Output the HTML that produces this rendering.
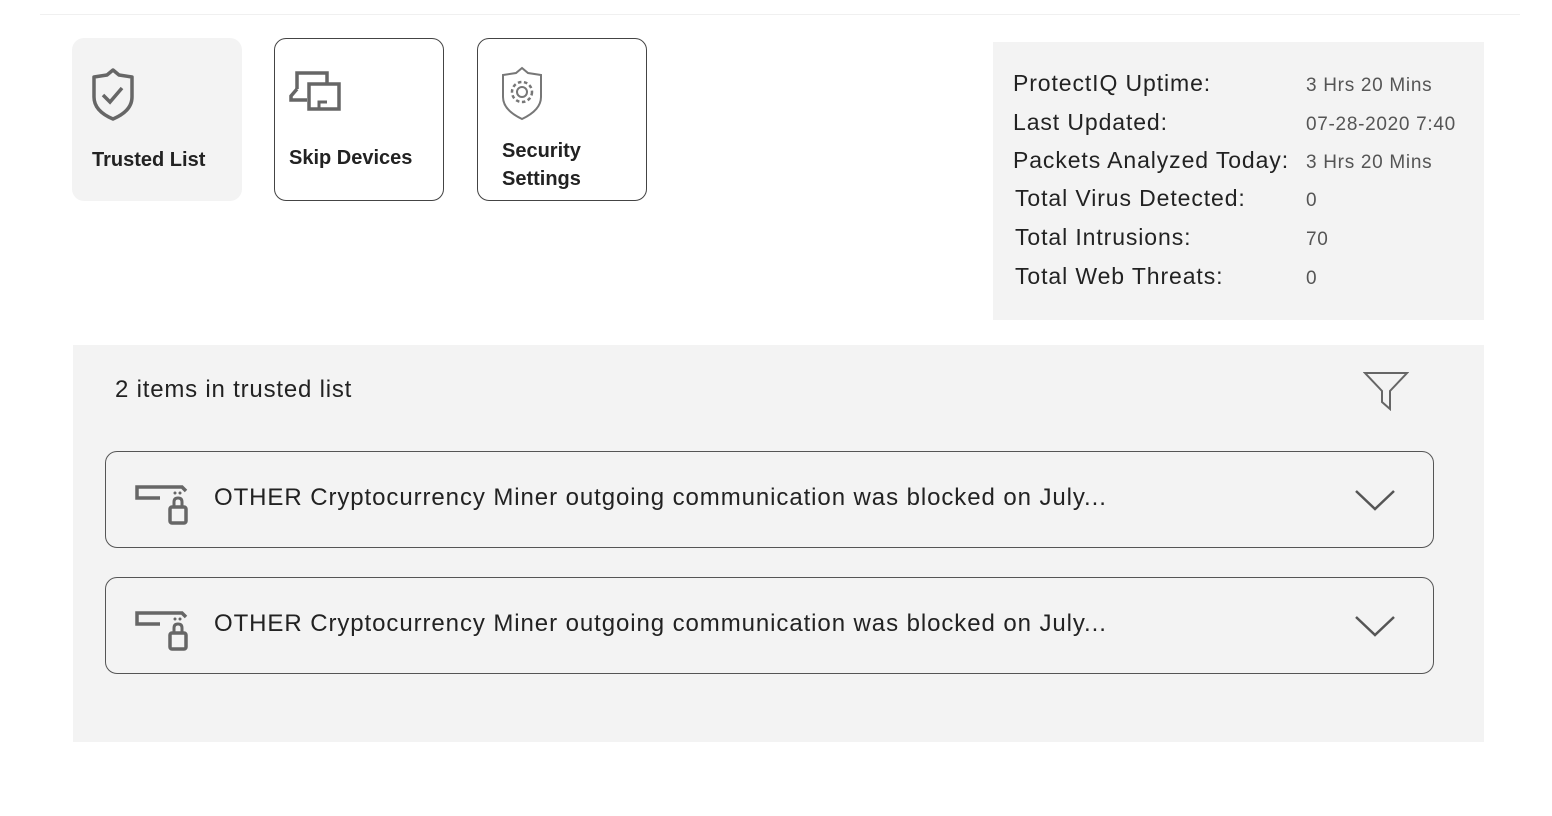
<!DOCTYPE html>
<html><head><style>
body{margin:0;width:1552px;height:816px;background:#fff;font-family:"Liberation Sans",sans-serif;color:#222;position:relative;overflow:hidden}
.abs{position:absolute}
.card{position:absolute;top:38px;width:170px;height:163px;box-sizing:border-box;border-radius:12px}
.card .t{position:absolute;font-weight:bold;font-size:20px;color:#222;line-height:28px}
.stats{left:993px;top:42px;width:491px;height:278px;background:#f3f3f3}
.lab{position:absolute;left:20px;font-size:23px;color:#222;letter-spacing:0.9px}
.val{position:absolute;left:313px;font-size:19px;color:#555;letter-spacing:0.7px}
.item{position:absolute;left:105px;width:1329px;height:97px;box-sizing:border-box;border:1.5px solid #555;border-radius:12px}
.item .txt{position:absolute;left:108px;top:32px;font-size:24px;color:#222;letter-spacing:0.92px}
</style></head><body>
<div class="abs" style="left:40px;top:14px;width:1480px;height:1px;background:#f0f0f0"></div>

<div class="card" style="left:72px;background:#f3f3f3">
<svg class="abs" style="left:17px;top:29px" width="50" height="56" viewBox="0 0 50 56"><path d="M24 3 L30 8 L43 10 L43 30 Q43 44 24 52 Q5 44 5 30 L5 10 L18 8 Z" fill="none" stroke="#666" stroke-width="3.5" stroke-linejoin="round"/><path d="M14 28 L21 35 L33 21" fill="none" stroke="#666" stroke-width="3.5"/></svg>
<div class="t" style="left:20px;top:108px">Trusted List</div>
</div>
<div class="card" style="left:274px;border:1.5px solid #444">
<svg class="abs" style="left:14px;top:30px" width="60" height="48" viewBox="0 0 60 48"><path d="M8 20 V4 H38 V14" fill="none" stroke="#666" stroke-width="3.5"/><path d="M8 20 L2 27 V31 H18" fill="none" stroke="#666" stroke-width="3.5"/><rect x="20" y="15" width="30" height="25" fill="none" stroke="#666" stroke-width="3.5"/><path d="M30 40 V33 H38" fill="none" stroke="#666" stroke-width="3"/></svg>
<div class="t" style="left:14px;top:105px">Skip Devices</div>
</div>
<div class="card" style="left:477px;border:1.5px solid #444">
<svg class="abs" style="left:21px;top:26px" width="48" height="58" viewBox="0 0 48 58"><path d="M23 3 L29 8 L42 10 L42 32 Q42 45 23 54 Q4 45 4 32 L4 10 L17 8 Z" fill="none" stroke="#777" stroke-width="2"/><circle cx="23" cy="27" r="5" fill="none" stroke="#777" stroke-width="2"/><circle cx="23" cy="27" r="10" fill="none" stroke="#777" stroke-width="2.5" stroke-dasharray="3.5 2.6"/></svg>
<div class="t" style="left:24px;top:98px">Security<br>Settings</div>
</div>

<div class="abs stats">
<div class="lab" style="top:28px">ProtectIQ Uptime:</div><div class="val" style="top:33px">3 Hrs 20 Mins</div>
<div class="lab" style="top:67px">Last Updated:</div><div class="val" style="top:72px">07-28-2020 7:40</div>
<div class="lab" style="top:105px">Packets Analyzed Today:</div><div class="val" style="top:110px">3 Hrs 20 Mins</div>
<div class="lab" style="top:143px;left:22px">Total Virus Detected:</div><div class="val" style="top:148px">0</div>
<div class="lab" style="top:182px;left:22px">Total Intrusions:</div><div class="val" style="top:187px">70</div>
<div class="lab" style="top:221px;left:22px">Total Web Threats:</div><div class="val" style="top:226px">0</div>
</div>

<div class="abs" style="left:73px;top:345px;width:1411px;height:397px;background:#f3f3f3">
<div class="abs" style="left:42px;top:31px;font-size:24px;color:#222;letter-spacing:0.8px">2 items in trusted list</div>
<svg class="abs" style="left:1290px;top:26px" width="46" height="40" viewBox="0 0 46 40"><path d="M2 2 H44 L27 20 V38 L19 31 V20 Z" fill="none" stroke="#666" stroke-width="2"/></svg>
</div>

<div class="item" style="top:451px">
<svg class="abs" style="left:28px;top:31px" width="60" height="44" viewBox="0 0 60 44"><path d="M26 15 H3 V4 H48 L52 8" fill="none" stroke="#666" stroke-width="3.5"/><circle cx="41" cy="10" r="1.5" fill="#666"/><circle cx="46" cy="10" r="1.5" fill="#666"/><path d="M40 24 V19 Q40 15 44 15 Q48 15 48 19 V24" fill="none" stroke="#666" stroke-width="3"/><rect x="36" y="24" width="16" height="16" rx="2" fill="none" stroke="#666" stroke-width="3.5"/></svg>
<div class="txt">OTHER Cryptocurrency Miner outgoing communication was blocked on July...</div>
<svg class="abs" style="left:1248px;top:36px" width="42" height="24" viewBox="0 0 42 24"><path d="M2 3 L21 21 L40 3" fill="none" stroke="#555" stroke-width="2.5"/></svg>
</div>
<div class="item" style="top:577px">
<svg class="abs" style="left:28px;top:31px" width="60" height="44" viewBox="0 0 60 44"><path d="M26 15 H3 V4 H48 L52 8" fill="none" stroke="#666" stroke-width="3.5"/><circle cx="41" cy="10" r="1.5" fill="#666"/><circle cx="46" cy="10" r="1.5" fill="#666"/><path d="M40 24 V19 Q40 15 44 15 Q48 15 48 19 V24" fill="none" stroke="#666" stroke-width="3"/><rect x="36" y="24" width="16" height="16" rx="2" fill="none" stroke="#666" stroke-width="3.5"/></svg>
<div class="txt">OTHER Cryptocurrency Miner outgoing communication was blocked on July...</div>
<svg class="abs" style="left:1248px;top:36px" width="42" height="24" viewBox="0 0 42 24"><path d="M2 3 L21 21 L40 3" fill="none" stroke="#555" stroke-width="2.5"/></svg>
</div>
</body></html>
